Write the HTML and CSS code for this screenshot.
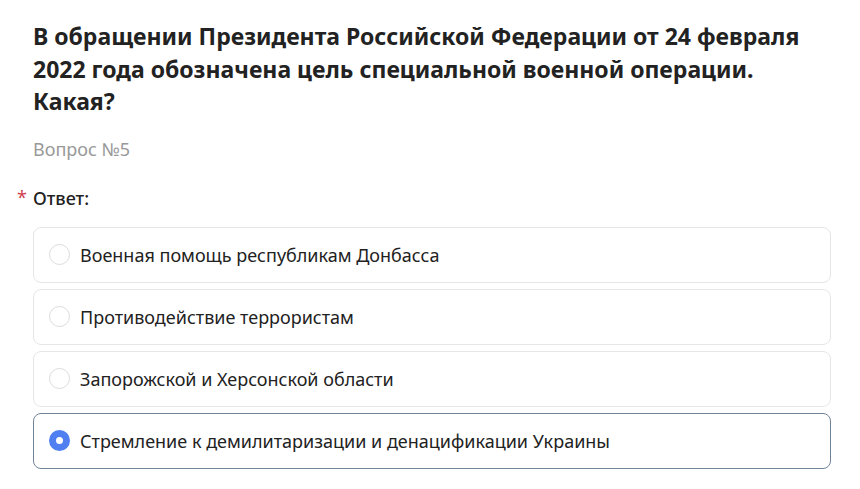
FILE: index.html
```html
<!DOCTYPE html>
<html lang="ru">
<head>
    <meta charset="UTF-8">
    <meta name="viewport" content="width=device-width, initial-scale=1.0">
    <title>Вопрос №5</title>
    <link rel="stylesheet" href="styles.css">
</head>
<body>
    <div class="question">
        <h1 class="question-title">В обращении Президента Российской Федерации от 24 февраля 2022 года обозначена цель специальной военной операции. Какая?</h1>
        <p class="question-number">Вопрос №5</p>

        <div class="answer-label"><span class="required">*</span>Ответ:</div>

        <div class="options">
            <label class="option">
                <span class="radio"></span>
                <span class="option-text">Военная помощь республикам Донбасса</span>
            </label>
            <label class="option">
                <span class="radio"></span>
                <span class="option-text">Противодействие террористам</span>
            </label>
            <label class="option">
                <span class="radio"></span>
                <span class="option-text">Запорожской и Херсонской области</span>
            </label>
            <label class="option checked">
                <span class="radio"></span>
                <span class="option-text">Стремление к демилитаризации и денацификации Украины</span>
            </label>
        </div>
    </div>
</body>
</html>
```

FILE: styles.css
```css
body {
    margin: 0;
    background-color: #fff;
    color: #222;
    font-family: 'Noto Sans', 'Open Sans', sans-serif;
}
.question {
    padding: 20px 29px 0 33px;
}
.question-title {
    margin: 0;
    font-size: 23px;
    line-height: 32.5px;
    font-weight: 700;
    color: #222;
}
.question-number {
    margin: 19px 0 0;
    font-size: 18px;
    line-height: 24px;
    color: #999;
}
.answer-label {
    position: relative;
    margin-top: 25px;
    font-size: 18px;
    line-height: 24px;
    font-weight: 500;
}
.required {
    position: absolute;
    left: -16px;
    top: -1px;
    color: #d0414d;
    font-weight: 400;
}
.options {
    display: flex;
    flex-direction: column;
    gap: 6px;
    margin-top: 17px;
}
.option {
    display: flex;
    align-items: center;
    height: 54px;
    padding: 0 15px;
    border: 1px solid #e6e6e6;
    border-radius: 8px;
    cursor: pointer;
}
.option.checked {
    border-color: #6f8399;
}
.radio {
    flex: none;
    box-sizing: border-box;
    width: 21px;
    height: 21px;
    margin-right: 10px;
    border: 1px solid #dcdcdc;
    border-radius: 50%;
    background-color: #fff;
}
.option.checked .radio {
    border: 7px solid #4f7ff0;
    background-color: #fff;
}
.option-text {
    font-size: 18px;
    line-height: 24px;
    color: #222;
}
```
